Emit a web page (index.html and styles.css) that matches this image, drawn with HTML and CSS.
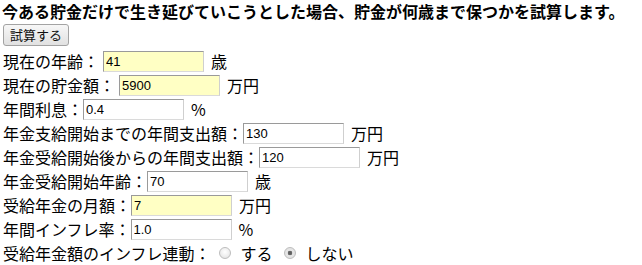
FILE: index.html
```
<!DOCTYPE html>
<html lang="ja">
<head>
<meta charset="utf-8">
<link rel="stylesheet" href="styles.css">
</head>
<body>
<h1 class="title">今ある貯金だけで生き延びていこうとした場合、貯金が何歳まで保つかを試算します。</h1>
<div class="actions"><button class="btn" type="button">試算する</button></div>
<form class="form">
  <div class="row"><span class="label spaced">現在の年齢：</span><input class="field req" type="text" value="41"><span class="unit">歳</span></div>
  <div class="row"><span class="label spaced">現在の貯金額：</span><input class="field req" type="text" value="5900"><span class="unit">万円</span></div>
  <div class="row"><span class="label">年間利息：</span><input class="field" type="text" value="0.4"><span class="unit">%</span></div>
  <div class="row"><span class="label">年金支給開始までの年間支出額：</span><input class="field" type="text" value="130"><span class="unit">万円</span></div>
  <div class="row"><span class="label">年金受給開始後からの年間支出額：</span><input class="field" type="text" value="120"><span class="unit">万円</span></div>
  <div class="row"><span class="label">年金受給開始年齢：</span><input class="field" type="text" value="70"><span class="unit">歳</span></div>
  <div class="row"><span class="label">受給年金の月額：</span><input class="field req" type="text" value="7"><span class="unit">万円</span></div>
  <div class="row"><span class="label">年間インフレ率：</span><input class="field" type="text" value="1.0"><span class="unit">%</span></div>
  <div class="row"><span class="label">受給年金額のインフレ連動：</span>
    <label class="opt first"><input class="radio" type="radio" name="link"><span class="opt-text">する</span></label>
    <label class="opt"><input class="radio" type="radio" name="link" checked><span class="opt-text">しない</span></label>
  </div>
</form>
</body>
</html>
```
FILE: styles.css
```
html, body {
  margin: 0;
  padding: 0;
  background: #ffffff;
}
body {
  padding-left: 3px;
  color: #000;
  font-family: "Noto Sans CJK JP", "Noto Sans", sans-serif;
  font-size: 16px;
}
.title {
  margin: 0 0 0 -1px;
  font-size: 16px;
  font-weight: bold;
  line-height: 22px;
  height: 24px;
  white-space: nowrap;
}
.actions {
  height: 25px;
}
.btn {
  display: block;
  width: 66px;
  height: 22px;
  margin: 0;
  padding: 0;
  border: 1px solid #a3a3a3;
  border-radius: 3px;
  background: linear-gradient(#f7f7f7, #e1e1e1);
  font-family: "Noto Sans CJK JP", sans-serif;
  font-size: 13px;
  color: #111;
  line-height: 20px;
}
.form {
  margin: 0;
}
.row {
  display: flex;
  align-items: center;
  height: 24px;
  white-space: nowrap;
  line-height: 20px;
}
.label.spaced {
  margin-right: 4px;
}
.field {
  box-sizing: border-box;
  width: 101px;
  height: 21px;
  margin: 0;
  padding: 0 2px;
  border: 1px solid;
  border-color: #9a9a9a #cfcfcf #dadada #9a9a9a;
  background: #ffffff;
  font-family: "Liberation Sans", Arial, sans-serif;
  font-size: 13px;
  color: #000;
  outline: none;
}
.field.req {
  background: #ffffc4;
}
.unit {
  margin-left: 7px;
}
.opt {
  display: flex;
  align-items: center;
}
.opt.first {
  margin-left: 8px;
}
.opt + .opt {
  margin-left: 11px;
}
.radio {
  appearance: none;
  -webkit-appearance: none;
  box-sizing: border-box;
  width: 12px;
  height: 12px;
  margin: 0 10px 0 0;
  border: 1px solid #bdbdbd;
  border-radius: 50%;
  background: radial-gradient(circle at 50% 40%, #ffffff 0%, #ececec 60%, #d8d8d8 100%);
}
.radio:checked {
  background: radial-gradient(circle, #5a5a5a 0, #6a6a6a 2px, #e6e6e6 2.6px, #e0e0e0 100%);
}
```
